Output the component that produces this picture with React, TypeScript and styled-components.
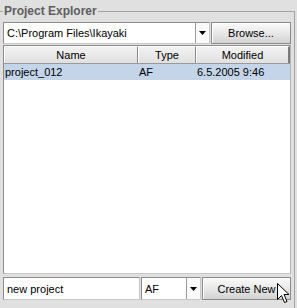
import styled, { createGlobalStyle } from 'styled-components'

const GlobalStyle = createGlobalStyle`
  html, body {
    margin: 0;
    padding: 0;
    background: #e0e0e0;
  }
  body {
    font-family: 'Liberation Sans', Arial, sans-serif;
    font-size: 11px;
    color: #000;
  }
`

type Row = { name: string; type: string; modified: string; selected?: boolean }

const rows: Row[] = [{ name: 'project_012', type: 'AF', modified: '6.5.2005 9:46', selected: true }]

function Arrow() {
  return (
    <svg width='7' height='4' viewBox='0 0 7 4'>
      <path d='M0 0 H7 L3.5 4 Z' fill='#000' />
    </svg>
  )
}

function Cursor() {
  return (
    <svg width='13' height='21' viewBox='0 0 13 21'>
      <path
        d='M0.5 0.5 V16.5 L4.5 12.5 L7.5 19.5 L10 18.5 L7 11.5 H12 Z'
        fill='#fff'
        stroke='#000'
        strokeWidth='1'
        strokeLinejoin='miter'
      />
    </svg>
  )
}

function App() {
  return (
    <Page>
      <GlobalStyle />
      <Group>
        <Legend>Project Explorer</Legend>
        <TopRow>
          <Combo $width={207}>
            <ComboText>C:\Program Files\Ikayaki</ComboText>
            <ComboArrow>
              <Arrow />
            </ComboArrow>
          </Combo>
          <Button $width={80}>Browse...</Button>
        </TopRow>
        <Table>
          <HeaderRow>
            <HeaderCell $width={134}>Name</HeaderCell>
            <HeaderCell $width={58}>Type</HeaderCell>
            <HeaderCell $width={94} $last>
              Modified
            </HeaderCell>
          </HeaderRow>
          {rows.map((r) => (
            <DataRow key={r.name} $selected={r.selected}>
              <Cell $width={134}>{r.name}</Cell>
              <Cell $width={58}>{r.type}</Cell>
              <Cell $width={94}>{r.modified}</Cell>
            </DataRow>
          ))}
        </Table>
        <BottomRow>
          <TextField value='new project' readOnly />
          <Combo $width={60}>
            <ComboText>AF</ComboText>
            <ComboArrow>
              <Arrow />
            </ComboArrow>
          </Combo>
          <Button $width={89}>
            Create New
            <CursorWrap>
              <Cursor />
            </CursorWrap>
          </Button>
        </BottomRow>
      </Group>
    </Page>
  )
}

const Page = styled.div`
  width: 297px;
  height: 308px;
  overflow: hidden;
  background: #e0e0e0;
`

const Group = styled.fieldset`
  margin: 0 0 0 -1px;
  width: 296px;
  box-sizing: border-box;
  border: 1px solid #a3a3a3;
  padding: 0 3px 12px 3px;
  min-width: 0;
`

const Legend = styled.legend`
  padding: 0 1px;
  margin: 0;
  font-family: 'Liberation Sans', Arial, sans-serif;
  font-weight: bold;
  font-size: 12px;
  line-height: 22px;
  color: #5e5e5e;
`

const TopRow = styled.div`
  display: flex;
  gap: 1px;
  height: 22px;
  margin-bottom: 1px;
`

const Combo = styled.div<{ $width: number }>`
  width: ${(p) => p.$width}px;
  box-sizing: border-box;
  display: flex;
  align-items: stretch;
  background: #fff;
  border: 1px solid #8c8c8c;
  border-right-color: #c8c8c8;
  border-bottom-color: #c8c8c8;
`

const ComboText = styled.div`
  flex: 1;
  display: flex;
  align-items: center;
  padding-left: 3px;
  white-space: nowrap;
  overflow: hidden;
`

const ComboArrow = styled.div`
  width: 13px;
  display: flex;
  align-items: center;
  justify-content: center;
  border-left: 1px solid #9a9a9a;
  background: #fafafa;
`

const Button = styled.div<{ $width: number }>`
  position: relative;
  width: ${(p) => p.$width}px;
  box-sizing: border-box;
  display: flex;
  align-items: center;
  justify-content: center;
  border: 1px solid #8a8a8a;
  background: linear-gradient(#fbfbfb, #e6e6e6 55%, #d2d2d2);
  box-shadow: inset 1px 1px 0 #ffffff;
  white-space: nowrap;
`

const CursorWrap = styled.div`
  position: absolute;
  left: 74px;
  top: 5px;
  line-height: 0;
`

const Table = styled.div`
  height: 229px;
  box-sizing: border-box;
  border: 1px solid #8c8c8c;
  border-right-color: #b4b4b4;
  border-bottom-color: #c8c8c8;
  background: #fff;
`

const HeaderRow = styled.div`
  display: flex;
  height: 17px;
  border-bottom: 1px solid #9a9a9a;
`

const HeaderCell = styled.div<{ $width: number; $last?: boolean }>`
  width: ${(p) => p.$width}px;
  flex: ${(p) => (p.$last ? '1' : 'none')};
  box-sizing: border-box;
  display: flex;
  align-items: center;
  justify-content: center;
  background: linear-gradient(#f2f2f2, #e0e0e0);
  border-top: 1px solid #ffffff;
  border-left: 1px solid #ffffff;
  border-right: 1px solid #8a8a8a;
  ${(p) => (p.$last ? 'border-right: 2px solid #7a7a7a;' : '')}
`

const DataRow = styled.div<{ $selected?: boolean }>`
  display: flex;
  height: 16px;
  background: ${(p) => (p.$selected ? '#c4d4e9' : '#fff')};
`

const Cell = styled.div<{ $width: number }>`
  width: ${(p) => p.$width}px;
  box-sizing: border-box;
  display: flex;
  align-items: center;
  padding-left: 1px;
  white-space: nowrap;
`

const BottomRow = styled.div`
  display: flex;
  gap: 1px;
  height: 23px;
  margin-top: 3px;
`

const TextField = styled.input`
  width: 137px;
  box-sizing: border-box;
  margin: 0;
  padding: 0 0 0 3px;
  font-family: 'Liberation Sans', Arial, sans-serif;
  font-size: 11px;
  color: #000;
  background: #fff;
  border: 1px solid #8c8c8c;
  border-right-color: #c8c8c8;
  border-bottom-color: #c8c8c8;
  outline: none;
`

export default App
